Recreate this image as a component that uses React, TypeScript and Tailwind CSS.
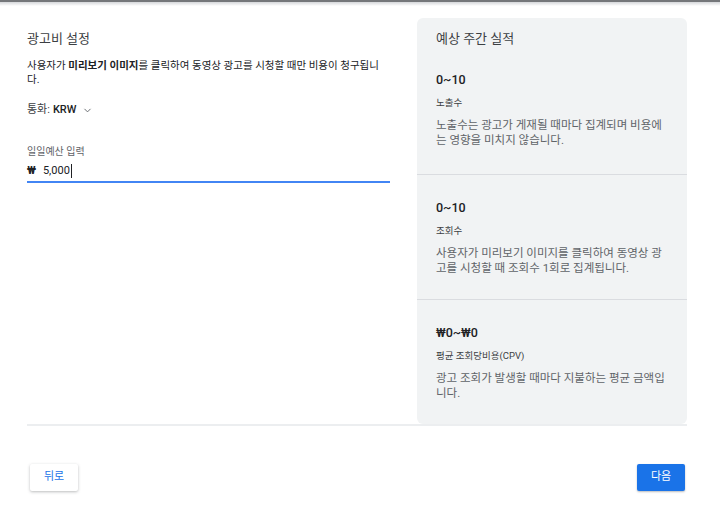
import React from 'react';
import { ChevronDown } from 'lucide-react';

type Stat = {
  value: string;
  label: string;
  desc: string;
};

const stats: Stat[] = [
  {
    value: '0~10',
    label: '노출수',
    desc: '노출수는 광고가 게재될 때마다 집계되며 비용에는 영향을 미치지 않습니다.',
  },
  {
    value: '0~10',
    label: '조회수',
    desc: '사용자가 미리보기 이미지를 클릭하여 동영상 광고를 시청할 때 조회수 1회로 집계됩니다.',
  },
  {
    value: '₩0~₩0',
    label: '평균 조회당비용(CPV)',
    desc: '광고 조회가 발생할 때마다 지불하는 평균 금액입니다.',
  },
];

const App: React.FC = () => {
  return (
    <div
      className="relative h-[511px] w-[720px] overflow-hidden bg-white text-[#202124]"
      style={{ fontFamily: 'Roboto, "Noto Sans CJK KR", sans-serif' }}
    >
      {/* top shadow edge */}
      <div className="h-[2px] bg-[#75777a]" />
      <div className="h-[4px] bg-gradient-to-b from-[#d5d7da] to-white" />

      <div className="flex w-[660px] gap-[27px] ml-[27px] pt-[12px]">
        {/* left column */}
        <div className="w-[363px] pt-[11px]">
          <h2 className="text-[13px] leading-[20px] text-[#3c4043]">광고비 설정</h2>
          <p className="mt-[10px] text-[10.5px] leading-[14px] text-[#202124]">
            <span>사용자가 </span>
            <b className="font-bold">미리보기 이미지</b>
            <span>를 클릭하여 동영상 광고를 시청할 때만 비용이 청구됩니</span>
            <br />
            <span>다.</span>
          </p>
          <div className="mt-[14px] flex items-center text-[11px] leading-[18px] text-[#3c4043]">
            <span>통화:</span>
            <span className="ml-[3px] font-medium text-[#202124]">KRW</span>
            <ChevronDown size={11} strokeWidth={2} className="ml-[6px] text-[#5f6368]" />
          </div>
          <div className="mt-[26px] text-[10px] leading-[14px] text-[#5f6368]">일일예산 입력</div>
          <div className="mt-[4px] flex items-center border-b-2 border-[#4285f4] pb-[2px] text-[11px] leading-[16px]">
            <span className="font-bold text-[#202124]">₩</span>
            <span className="ml-[7px] text-[#202124]">5,000</span>
            <span className="ml-[1px] h-[14px] w-px bg-[#202124]" />
          </div>
        </div>

        {/* right panel */}
        <div className="w-[270px] rounded-[6px] bg-[#f1f3f4]">
          <div className="h-[29px] px-[19px] pt-[11px] text-[13px] leading-[20px] text-[#3c4043]">
            예상 주간 실적
          </div>
          {stats.map((s, i) => (
            <div
              key={i}
              className={`px-[19px] ${i === 0 ? 'h-[127px] pt-[24px]' : 'h-[125px] border-t border-[#dadce0] pt-[24px]'}`}
            >
              <div className="text-[12.5px] font-medium leading-[18px] text-[#202124]">{s.value}</div>
              <div className="mt-[7px] text-[9.5px] leading-[14px] text-[#3c4043]">{s.label}</div>
              <p className="mt-[8px] w-[232px] text-[11.5px] leading-[14.5px] text-[#5f6368]">{s.desc}</p>
            </div>
          ))}
        </div>
      </div>

      <div className="ml-[27px] h-[2px] w-[660px] bg-[#eceef0]" />

      <div className="flex items-center justify-between pl-[30px] pr-[35px] pt-[38px]">
        <button className="h-[27px] w-[48px] rounded-[2px] bg-white text-[11px] text-[#1a73e8] shadow-[0_1px_3px_rgba(60,64,67,0.35)]">
          뒤로
        </button>
        <button className="h-[27px] w-[48px] rounded-[2px] bg-[#1a73e8] text-[11px] text-white shadow-[0_1px_2px_rgba(60,64,67,0.35)]">
          다음
        </button>
      </div>
    </div>
  );
};

export default App;
